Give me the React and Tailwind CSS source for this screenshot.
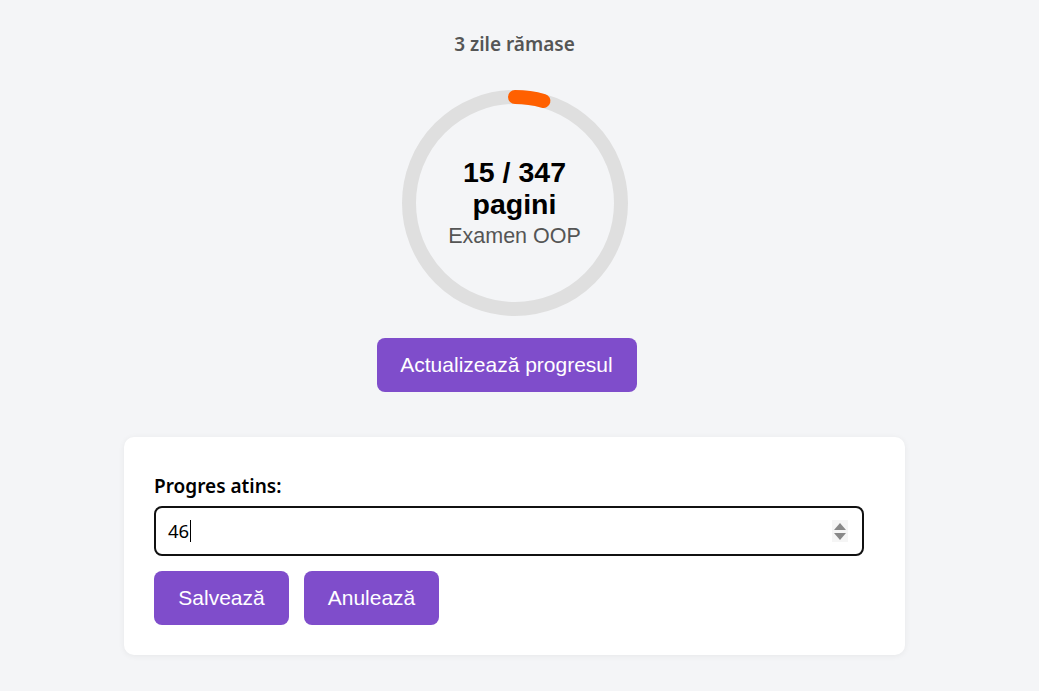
import { useState } from 'react';

const total = 347;
const done = 15;

function ProgressRing({ value, max }) {
  const r = 106;
  const c = 2 * Math.PI * r;
  const part = (value / max) * c;
  return (
    <div className="relative w-[226px] h-[226px]">
      <svg width="226" height="226" viewBox="0 0 226 226" className="absolute inset-0">
        <circle cx="113" cy="113" r={r} fill="none" stroke="#dfdfdf" strokeWidth="14" />
        <circle
          cx="113" cy="113" r={r} fill="none" stroke="#ff6000" strokeWidth="14" strokeLinecap="round"
          strokeDasharray={`${part} ${c}`} transform="rotate(-90 113 113)"
        />
      </svg>
      <div className="absolute inset-0 flex flex-col items-center justify-center text-center font-['Liberation_Sans',Arial,sans-serif] pb-[1px]">
        <div className="text-[28.5px] leading-[32px] font-bold text-black">{value} / {max}<br />pagini</div>
        <div className="mt-[3px] text-[21.5px] leading-[26px] text-[#555]">Examen OOP</div>
      </div>
    </div>
  );
}

export default function App() {
  const [val] = useState('46');

  return (
    <div className="min-h-screen bg-[#f4f5f7] pr-[10px] font-['Noto_Sans',sans-serif]">
      <div className="flex flex-col items-center pt-[31px]">
        <p className="text-[19px] leading-[26px] font-semibold text-[#555]">3 zile rămase</p>

        <div className="mt-[33px]">
          <ProgressRing value={done} max={total} />
        </div>

        <button className="mt-[22px] mr-[16px] w-[260px] h-[54px] bg-[#7f4dcb] text-white rounded-lg text-[21px] font-['Liberation_Sans',Arial,sans-serif]">
          Actualizează progresul
        </button>

        <div className="mt-[45px] w-[781px] bg-white rounded-[10px] shadow-[0_1px_6px_rgba(0,0,0,0.06)] pl-[30px] pt-[37px] pb-[30px]">
          <label className="block text-[19px] leading-[25px] font-semibold text-black">Progres atins:</label>
          <div className="relative mt-[7px] w-[710px] h-[50px] border-[2.5px] border-[#111] rounded-lg flex items-center pl-[12px]">
            <span className="text-[18.5px] text-black">{val}</span>
            <span className="w-px h-[22px] bg-black ml-[1px]" />
            <div className="absolute right-[14px] top-1/2 -translate-y-1/2 w-[16px] h-[22px] bg-[#f5f5f5] flex flex-col items-center justify-center gap-[3px]">
              <svg width="12" height="7" viewBox="0 0 12 7"><path d="M6 0L12 7H0z" fill="#888" /></svg>
              <svg width="12" height="7" viewBox="0 0 12 7"><path d="M0 0H12L6 7z" fill="#888" /></svg>
            </div>
          </div>
          <div className="flex gap-[15px] mt-[15px] font-['Liberation_Sans',Arial,sans-serif]">
            <button className="w-[135px] h-[54px] bg-[#7f4dcb] text-white rounded-lg text-[21px]">Salvează</button>
            <button className="w-[135px] h-[54px] bg-[#7f4dcb] text-white rounded-lg text-[21px]">Anulează</button>
          </div>
        </div>
      </div>
    </div>
  );
}
